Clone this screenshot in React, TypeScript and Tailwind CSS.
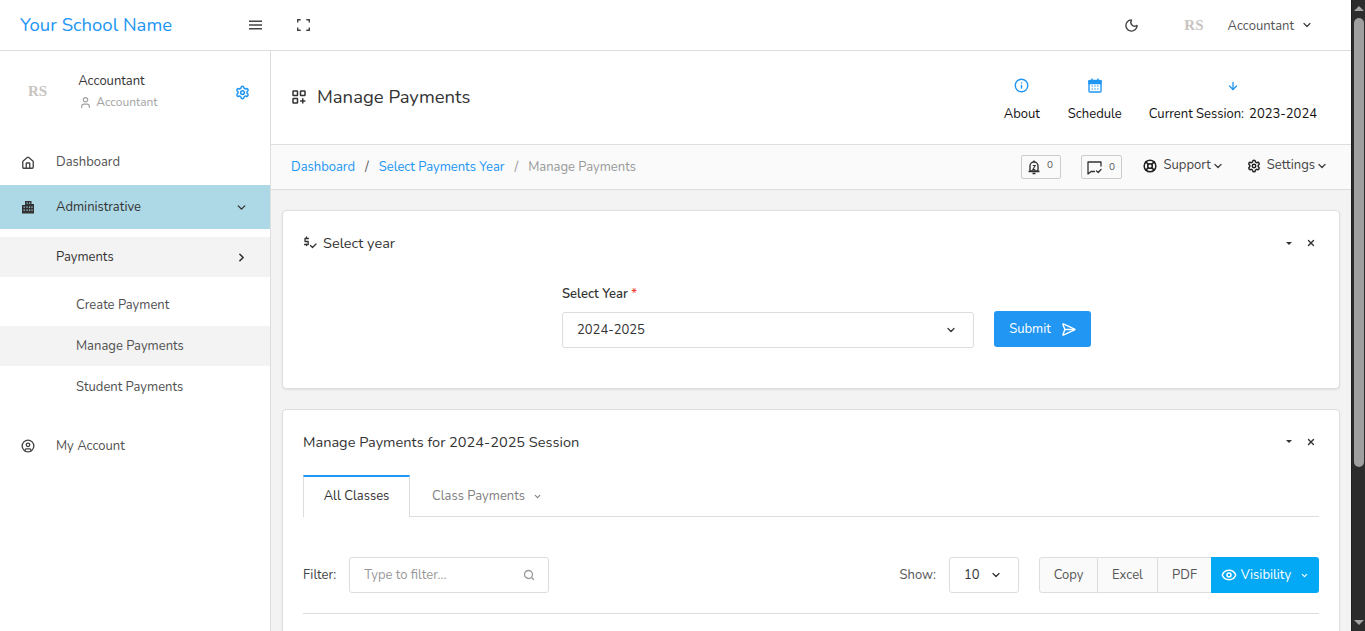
import React from "react";
import { Moon, ChevronDown, ChevronRight, Settings, User, Home, Info, ArrowDown, LifeBuoy, Search, Eye, CircleUser, X, SendHorizontal } from "lucide-react";

const Ini = ({ className = "" }: { className?: string }) => (
  <span className={`font-['Liberation_Serif',serif] font-bold text-[#c9c4bf] ${className}`}>RS</span>
);

function Card({ children, className = "" }: { children: React.ReactNode; className?: string }) {
  return <div className={`bg-white border border-[#dedede] rounded-[4px] shadow-[0_1px_2px_rgba(0,0,0,0.08)] ${className}`}>{children}</div>;
}

function CardTools({ className = "" }: { className?: string }) {
  return (
    <div className={`flex items-center gap-[14px] ${className}`}>
      <span className="w-0 h-0 border-x-[3.5px] border-x-transparent border-t-[3.5px] border-t-[#333]" />
      <X size={10} strokeWidth={3.2} className="text-[#333]" />
    </div>
  );
}

export default function App() {
  return (
    <div className="h-[631px] w-[1365px] overflow-hidden flex font-['Nunito','Open_Sans',sans-serif] text-[13px] text-[#333]">
      <div className="flex-1 min-w-0 flex flex-col bg-[#f3f3f3]">
        {/* top bar */}
        <header className="h-[51px] shrink-0 bg-white border-b border-[#dedede] flex items-center">
          <div className="w-[249px] pl-5 pt-[2px] text-[18.5px] text-[#2196f3]">Your School Name</div>
          <MenuIcon />
          <FullscreenIcon />
          <div className="ml-auto flex items-center pr-[38px]">
            <Moon size={15} strokeWidth={2.2} className="text-[#444]" />
            <Ini className="ml-[45px] text-[15px]" />
            <span className="ml-[24px] pt-[3px] text-[#555]">Accountant</span>
            <ChevronDown size={12} strokeWidth={2.5} className="ml-[7px] text-[#444]" />
          </div>
        </header>
        <div className="flex-1 flex min-h-0">
          {/* sidebar */}
          <aside className="w-[271px] shrink-0 bg-white border-r border-[#dedede] flex flex-col text-[#505050]">
            <div className="h-[89px] shrink-0 flex items-start pl-[28px] pr-[20px] pt-[21px]">
              <Ini className="text-[15px] mt-[8px]" />
              <div className="ml-[31px]">
                <div className="leading-[18px] text-[#333]">Accountant</div>
                <div className="mt-[3px] flex items-center gap-[4px] text-[12px] leading-[18px] text-[#a3a3a3]">
                  <User size={13} strokeWidth={2.2} className="ml-[1px]" />
                  Accountant
                </div>
              </div>
              <Settings size={15} strokeWidth={2.4} className="ml-auto mt-[13px] text-[#2196f3]" />
            </div>
            <div className="h-[45px] shrink-0 flex items-center pl-[21px]">
              <Home size={14} strokeWidth={2.3} className="text-[#444]" />
              <span className="ml-[21px]">Dashboard</span>
            </div>
            <div className="h-[44px] shrink-0 flex items-center pl-[21px] pr-[22px] bg-[#add8e6] text-[#333]">
              <BuildingIcon />
              <span className="ml-[21px] pt-[2px]">Administrative</span>
              <ChevronDown size={13} strokeWidth={2.5} className="ml-auto" />
            </div>
            <div className="mt-[8px] h-[40px] shrink-0 flex items-center pl-[56px] pr-[22px] bg-[#f3f3f3] text-[#333]">
              <span className="pt-[2px]">Payments</span>
              <ChevronRight size={13} strokeWidth={3} className="ml-auto" />
            </div>
            <div className="mt-[8px] h-[41px] shrink-0 flex items-center pl-[76px]">Create Payment</div>
            <div className="h-[40px] shrink-0 flex items-center pl-[76px] pt-[2px] bg-[#f3f3f3]">Manage Payments</div>
            <div className="h-[41px] shrink-0 flex items-center pl-[76px] pt-[2px]">Student Payments</div>
            <div className="mt-[18px] h-[41px] shrink-0 flex items-center pl-[21px]">
              <CircleUser size={14} strokeWidth={2.3} className="text-[#444]" />
              <span className="ml-[21px] pt-[2px]">My Account</span>
            </div>
          </aside>
          {/* main */}
          <main className="flex-1 min-w-0 flex flex-col">
            <div className="h-[94px] shrink-0 bg-white border-b border-[#dedede] flex items-start pl-[21px] pr-[34px]">
              <div className="flex items-center mt-[35px]">
                <AppsIcon />
                <span className="ml-[11px] text-[18.5px] leading-[22px] text-[#333]">Manage Payments</span>
              </div>
              <div className="ml-auto flex mt-[27px] text-[13px] text-[#111]">
                <div className="flex flex-col items-center gap-[12px]"><Info size={15} strokeWidth={2.2} className="text-[#2196f3]" /><span className="leading-[18px]">About</span></div>
                <div className="ml-[28px] flex flex-col items-center gap-[12px]"><CalendarIcon /><span className="leading-[18px]">Schedule</span></div>
                <div className="ml-[27px] flex flex-col items-center gap-[12px]"><ArrowDown size={12} strokeWidth={2.6} className="text-[#2196f3] my-[1.5px]" /><span className="leading-[18px] flex gap-[5px]"><span>Current Session:</span><span>2023-2024</span></span></div>
              </div>
            </div>
            <div className="h-[45px] shrink-0 bg-[#fafafa] border-b border-[#dedede] flex items-center pl-[20px] pr-[23px]">
              <div className="flex pt-[2px]">
                <span className="text-[#2196f3]">Dashboard</span>
                <span className="mx-[10px] text-[#555]">/</span>
                <span className="text-[#2196f3]">Select Payments Year</span>
                <span className="mx-[10px] text-[#999]">/</span>
                <span className="text-[#999]">Manage Payments</span>
              </div>
              <div className="ml-auto flex items-center">
                <div className="h-6 w-10 border border-[#ccc] rounded-[2px] flex items-center justify-center gap-[7px] text-[10px] text-[#555]"><BellIcon /><span className="pb-[3px]">0</span></div>
                <div className="ml-5 h-6 w-[41px] border border-[#ccc] rounded-[2px] flex items-center justify-center gap-[7px] text-[10px] text-[#555]"><ChatIcon /><span>0</span></div>
                <LifeBuoy size={14} strokeWidth={2.6} className="ml-[21px] mb-[2px] text-[#222]" />
                <span className="ml-[7px] pb-[2px] text-[#444]">Support</span>
                <ChevronDown size={12} strokeWidth={2.8} className="ml-[1px] mb-[2px] text-[#444]" />
                <Settings size={14} strokeWidth={2.5} className="ml-[23px] mb-[2px] text-[#222]" />
                <span className="ml-[6px] pb-[2px] text-[#444]">Settings</span>
                <ChevronDown size={12} strokeWidth={2.8} className="ml-[1px] mb-[2px] text-[#444]" />
              </div>
            </div>
            <div className="flex-1 min-h-0 overflow-hidden px-[11px] pt-[20px]">
              <Card className="h-[179px] px-[20px]">
                <div className="h-[64px] flex items-center justify-between pr-[3px]">
                  <div className="flex items-center gap-[6px] text-[14.5px] text-[#333]"><YearIcon /><span className="pt-[2px]">Select year</span></div>
                  <CardTools />
                </div>
                <div className="mt-[10px] ml-[259px] flex items-end gap-[20px]">
                  <div className="w-[412px]">
                    <div className="text-[13px] font-semibold leading-[18px] text-[#333] mb-[9px]">Select Year <span className="text-[#f44336]">*</span></div>
                    <div className="h-9 border border-[#ddd] rounded-[3px] flex items-center pl-[14px] pr-[16px] text-[#333]"><span className="pt-[2px]">2024-2025</span><ChevronDown size={12} strokeWidth={2.5} className="ml-auto" /></div>
                  </div>
                  <div className="h-9 w-[97px] mb-[1px] bg-[#2196f3] rounded-[3px] text-white flex items-center justify-center gap-[10px]"><span className="pt-[2px]">Submit</span><SendHorizontal size={15} strokeWidth={2.2} /></div>
                </div>
              </Card>
              <Card className="mt-[20px] h-[300px] px-[20px]">
                <div className="h-[65px] flex items-center justify-between pr-[3px]">
                  <div className="text-[14.55px] text-[#333]">Manage Payments for 2024-2025 Session</div>
                  <CardTools className="-mt-[2px]" />
                </div>
                <div className="h-[42px] border-b border-[#ddd] flex">
                  <div className="w-[107px] h-[42px] bg-white border-x border-[#ddd] border-t-2 border-t-[#2196f3] flex items-center justify-center">All Classes</div>
                  <div className="ml-[22px] pt-[2px] flex items-center text-[#808080]">Class Payments<ChevronDown size={9} strokeWidth={3} className="ml-[8px]" /></div>
                </div>
                <div className="mt-[40px] h-9 flex items-center">
                  <span className="pt-[2px] text-[#444]">Filter:</span>
                  <div className="ml-[13px] w-[200px] h-9 border border-[#ddd] rounded-[3px] flex items-center pl-[14px] pr-[13px] text-[#999]"><span className="pt-[2px]">Type to filter...</span><Search size={12} strokeWidth={2.6} className="ml-auto text-[#999]" /></div>
                  <span className="ml-auto pt-[2px] text-[#555]">Show:</span>
                  <div className="ml-[13px] w-[70px] h-9 border border-[#ddd] rounded-[3px] flex items-center pl-[14px] pr-[16px]"><span className="pt-[2px]">10</span><ChevronDown size={12} strokeWidth={2.5} className="ml-auto" /></div>
                  <div className="ml-[20px] h-9 flex text-[#555]">
                    <div className="w-[59px] pt-[2px] bg-[#fafafa] border border-[#ddd] rounded-l-[3px] flex items-center justify-center">Copy</div>
                    <div className="w-[60px] pt-[2px] bg-[#fafafa] border-y border-r border-[#ddd] flex items-center justify-center">Excel</div>
                    <div className="w-[53px] pt-[2px] bg-[#fafafa] border-y border-[#ddd] flex items-center justify-center">PDF</div>
                    <div className="w-[108px] bg-[#03a9f4] rounded-r-[3px] text-white flex items-center justify-center gap-[4px]"><Eye size={16} strokeWidth={2.3} /><span className="pt-[2px]">Visibility</span><ChevronDown size={9} strokeWidth={3} className="ml-[5px]" /></div>
                  </div>
                </div>
                <div className="mt-[20px] border-t border-[#ddd]" />
              </Card>
            </div>
          </main>
        </div>
      </div>
      {/* browser scrollbar */}
      <div className="w-[14px] shrink-0 bg-[#2c2c2c] flex flex-col items-center border-l border-[#1f1f1f]">
        <div className="mt-[6px] w-0 h-0 border-x-[5px] border-x-transparent border-b-[5px] border-b-[#a3a3a3]" />
        <div className="mt-[7px] w-[10px] h-[449px] rounded-full bg-[#9f9f9f]" />
        <div className="mt-auto mb-[6px] w-0 h-0 border-x-[5px] border-x-transparent border-t-[5px] border-t-[#a3a3a3]" />
      </div>
    </div>
  );
}

function MenuIcon() {
  return (
    <svg width="13" height="10" viewBox="0 0 13 10" stroke="#444" strokeWidth="1.5">
      <path d="M0 1.2h13M0 5h13M0 8.8h13" />
    </svg>
  );
}
function FullscreenIcon() {
  return (
    <svg width="13" height="12" viewBox="0 0 13 12" fill="none" stroke="#444" strokeWidth="1.4" className="ml-[35px]">
      <path d="M.7 3.5V.7h3M9.3.7h3v2.8M12.3 8.5v2.8h-3M3.7 11.3h-3V8.5" />
    </svg>
  );
}
function AppsIcon() {
  return (
    <svg width="14" height="14" viewBox="0 0 14 14" fill="none" stroke="#333" strokeWidth="1.5">
      <rect x="1" y="1" width="4.5" height="4.5" rx=".5" />
      <rect x="8.5" y="1" width="4.5" height="4.5" rx=".5" />
      <rect x="1" y="8.5" width="4.5" height="4.5" rx=".5" />
      <path d="M10.75 8.3v5.2M8.1 10.9h5.3" />
    </svg>
  );
}
function BuildingIcon() {
  return (
    <svg width="14" height="14" viewBox="0 0 14 14">
      <path d="M4 1h6.5v3H13v9.5H1V5h3z" fill="#333" />
      <path d="M5.5 2.6h1.2v1.2H5.5zM8 2.6h1.2v1.2H8zM2.6 6.5h1.2v1.2H2.6zM5.5 6.5h1.2v1.2H5.5zM8 6.5h1.2v1.2H8zM10.4 6.5h1.2v1.2h-1.2zM2.6 9.5h1.2v1.2H2.6zM5.5 9.5h1.2v1.2H5.5zM8 9.5h1.2v1.2H8zM10.4 9.5h1.2v1.2h-1.2z" fill="#add8e6" />
    </svg>
  );
}
function CalendarIcon() {
  return (
    <svg width="14" height="15" viewBox="0 0 14 15" fill="none" stroke="#2196f3" strokeWidth="1.4">
      <rect x="1" y="2.5" width="12" height="11.5" rx="1" />
      <path d="M1 3h12v2.6H1z" fill="#2196f3" />
      <path d="M4 .5v2.5M10 .5v2.5" />
      <path d="M3.5 8h1.5M6.3 8h1.5M9 8h1.5M3.5 11h1.5M6.3 11h1.5M9 11h1.5" strokeWidth="1.1" />
    </svg>
  );
}
function BellIcon() {
  return (
    <svg width="12" height="15" viewBox="0 0 12 15" fill="none" stroke="#333" strokeWidth="1.4">
      <path d="M2 11V6a4 4 0 0 1 8 0v5z" />
      <path d="M.5 11.5h11M4.5 13.5h3M6 .5v1.5" />
      <path d="M4.7 5.5h2.5L4.9 9.5h2.4" strokeWidth="1.1" />
    </svg>
  );
}
function ChatIcon() {
  return (
    <svg width="15" height="15" viewBox="0 0 15 15" fill="none" stroke="#333" strokeWidth="1.3" strokeLinecap="round" strokeLinejoin="round">
      <path d="M14 6V2H1v12l3-2.5h3.5" />
      <path d="M9.5 11l1.7 1.5L14 9.5" />
    </svg>
  );
}
function YearIcon() {
  return (
    <svg width="14" height="14" viewBox="0 0 14 14" fill="none" stroke="#333" strokeWidth="1.3" strokeLinecap="round" strokeLinejoin="round">
      <path d="M5.5 2.5H2v3h3.2v3H1.5" />
      <path d="M3.5 1v1M3.5 8.5v1" />
      <path d="M7.5 9.5l2 2 3.5-3.5" />
    </svg>
  );
}
